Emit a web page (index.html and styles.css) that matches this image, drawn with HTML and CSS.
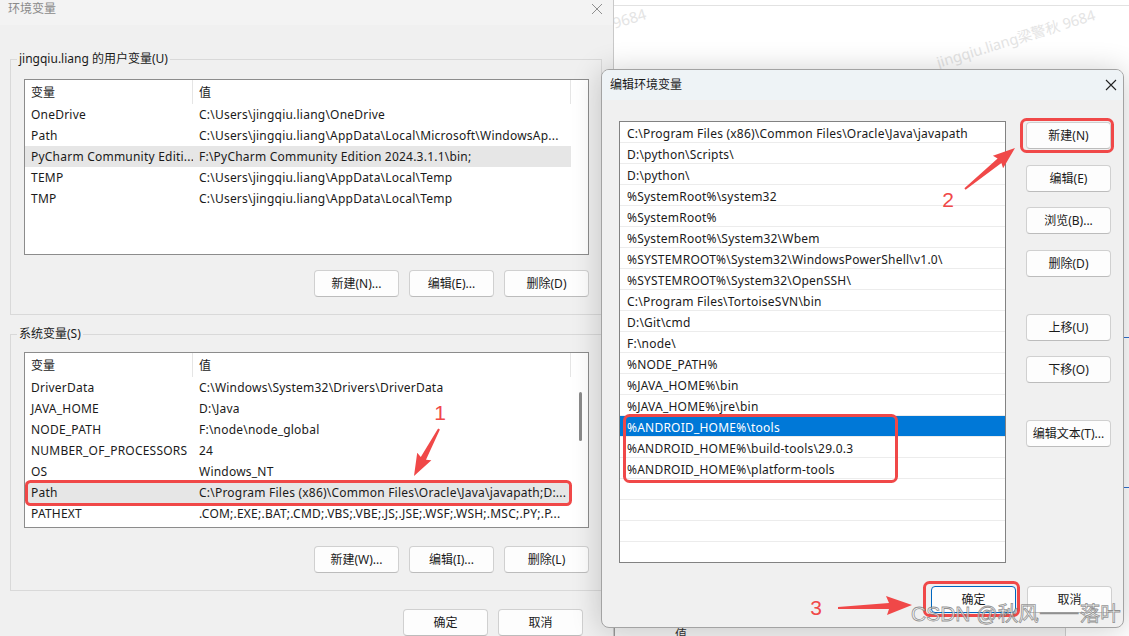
FILE: index.html
```html
<!DOCTYPE html>
<html lang="zh-CN">
<head>
<meta charset="utf-8">
<title>环境变量</title>
<link rel="stylesheet" href="styles.css">
</head>
<body>
<div class="desktop">

  <div class="bg-window">
    <div class="bg-topline"></div>
    <span class="wm wm-small">9684</span>
    <span class="wm wm-big">jingqiu.liang梁警秋 9684</span>
    <div class="edge-mark edge-a"></div>
    <div class="edge-mark edge-b"></div>
    <div class="bg-bottom"><span class="bg-bottom-text">值</span></div>
  </div>

  <section class="env">
    <header class="titlebar-env">
      <span class="title-env">环境变量</span>
      <svg class="close-env" viewBox="0 0 12 12"><path d="M1 1L11 11M11 1L1 11" stroke="#8f8f8f" stroke-width="1" fill="none"/></svg>
    </header>

    <div class="group g-user">
      <div class="group-label">jingqiu.liang 的用户变量(U)</div>
      <div class="listview">
        <div class="lv-head"><span class="c1">变量</span><span class="c2">值</span></div>
        <div class="lv-row"><span class="c1">OneDrive</span><span class="c2">C:\Users\jingqiu.liang\OneDrive</span></div>
        <div class="lv-row"><span class="c1">Path</span><span class="c2">C:\Users\jingqiu.liang\AppData\Local\Microsoft\WindowsAp...</span></div>
        <div class="lv-row sel"><span class="c1">PyCharm Community Editi...</span><span class="c2">F:\PyCharm Community Edition 2024.3.1.1\bin;</span></div>
        <div class="lv-row"><span class="c1">TEMP</span><span class="c2">C:\Users\jingqiu.liang\AppData\Local\Temp</span></div>
        <div class="lv-row"><span class="c1">TMP</span><span class="c2">C:\Users\jingqiu.liang\AppData\Local\Temp</span></div>
      </div>
      <div class="btn-row">
        <button class="btn">新建(N)...</button>
        <button class="btn">编辑(E)...</button>
        <button class="btn">删除(D)</button>
      </div>
    </div>

    <div class="group g-sys">
      <div class="group-label">系统变量(S)</div>
      <div class="listview">
        <div class="lv-head"><span class="c1">变量</span><span class="c2">值</span></div>
        <div class="lv-row"><span class="c1">DriverData</span><span class="c2">C:\Windows\System32\Drivers\DriverData</span></div>
        <div class="lv-row"><span class="c1">JAVA_HOME</span><span class="c2">D:\Java</span></div>
        <div class="lv-row"><span class="c1">NODE_PATH</span><span class="c2">F:\node\node_global</span></div>
        <div class="lv-row"><span class="c1">NUMBER_OF_PROCESSORS</span><span class="c2">24</span></div>
        <div class="lv-row"><span class="c1">OS</span><span class="c2">Windows_NT</span></div>
        <div class="lv-row sel"><span class="c1">Path</span><span class="c2">C:\Program Files (x86)\Common Files\Oracle\Java\javapath;D:...</span></div>
        <div class="lv-row"><span class="c1">PATHEXT</span><span class="c2">.COM;.EXE;.BAT;.CMD;.VBS;.VBE;.JS;.JSE;.WSF;.WSH;.MSC;.PY;.P...</span></div>
        <div class="thumb"></div>
      </div>
      <div class="btn-row">
        <button class="btn">新建(W)...</button>
        <button class="btn">编辑(I)...</button>
        <button class="btn">删除(L)</button>
      </div>
    </div>

    <div class="footer-env">
      <button class="btn">确定</button>
      <button class="btn">取消</button>
    </div>
  </section>

  <section class="edit">
    <header class="titlebar-edit">
      <span class="title-edit">编辑环境变量</span>
      <svg class="close-edit" viewBox="0 0 12 12"><path d="M1 1L11 11M11 1L1 11" stroke="#222" stroke-width="1.1" fill="none"/></svg>
    </header>
    <div class="edit-body">
      <div class="pathlist">
        <div class="pl-row">C:\Program Files (x86)\Common Files\Oracle\Java\javapath</div>
        <div class="pl-row">D:\python\Scripts\</div>
        <div class="pl-row">D:\python\</div>
        <div class="pl-row">%SystemRoot%\system32</div>
        <div class="pl-row">%SystemRoot%</div>
        <div class="pl-row">%SystemRoot%\System32\Wbem</div>
        <div class="pl-row">%SYSTEMROOT%\System32\WindowsPowerShell\v1.0\</div>
        <div class="pl-row">%SYSTEMROOT%\System32\OpenSSH\</div>
        <div class="pl-row">C:\Program Files\TortoiseSVN\bin</div>
        <div class="pl-row">D:\Git\cmd</div>
        <div class="pl-row">F:\node\</div>
        <div class="pl-row">%NODE_PATH%</div>
        <div class="pl-row">%JAVA_HOME%\bin</div>
        <div class="pl-row">%JAVA_HOME%\jre\bin</div>
        <div class="pl-row sel">%ANDROID_HOME%\tools</div>
        <div class="pl-row">%ANDROID_HOME%\build-tools\29.0.3</div>
        <div class="pl-row">%ANDROID_HOME%\platform-tools</div>
        <div class="pl-row"></div>
        <div class="pl-row"></div>
        <div class="pl-row"></div>
        <div class="pl-row"></div>
      </div>
      <div class="side">
        <button class="btn s-first">新建(N)</button>
        <button class="btn s-16">编辑(E)</button>
        <button class="btn s-15">浏览(B)...</button>
        <button class="btn s-16">删除(D)</button>
        <button class="btn s-37">上移(U)</button>
        <button class="btn s-15">下移(O)</button>
        <button class="btn s-37">编辑文本(T)...</button>
      </div>
    </div>
    <div class="footer-edit">
      <button class="btn btn-default">确定</button>
      <button class="btn">取消</button>
    </div>
  </section>

  <svg class="annot" viewBox="0 0 1129 636" width="1129" height="636">
    <g fill="none" stroke="#f04848" stroke-width="3">
      <rect x="26.5" y="481.5" width="544" height="23" rx="4"/>
      <rect x="624.5" y="415.5" width="272" height="66" rx="5"/>
      <rect x="1021.5" y="119.5" width="91" height="32" rx="5"/>
      <rect x="924.5" y="582.5" width="94" height="33" rx="5"/>
    </g>
    <g fill="#f04848">
      <polygon points="439.9,429.5 426.0,459.7 431.4,460.3 414,476 417.2,452.7 420.8,456.9 438.1,428.5"/>
      <polygon points="965.6,189.8 1001.4,163.0 1003.1,168.2 1015,148 992.9,155.8 997.6,158.4 964.4,188.2"/>
      <polygon points="838,607 889,603 886,596 912,605 887,615 889,609 838,609"/>
    </g>
    <g class="num" fill="#f04848">
      <text x="440" y="420" text-anchor="middle">1</text>
      <text x="948" y="207" text-anchor="middle">2</text>
      <text x="816" y="615" text-anchor="middle">3</text>
    </g>
  </svg>

  <span class="csdn">CSDN @<span class="csdn-cjk">秋风——落叶</span></span>
</div>
</body>
</html>
```

FILE: styles.css
```css
* { box-sizing: border-box; }
html, body { margin: 0; padding: 0; }
body {
  width: 1129px;
  height: 636px;
  overflow: hidden;
  background: #fff;
  font-family: "Noto Sans", "Noto Sans CJK SC", sans-serif;
  font-size: 12px;
  color: #1a1a1a;
}
.desktop { position: relative; width: 1129px; height: 636px; overflow: hidden; }

/* background window (behind) */
.bg-window { position: absolute; left: 614px; top: 0; width: 515px; height: 636px; background: #fff; }
.bg-topline { height: 6px; border-bottom: 1px solid #e2e2e2; }
.wm { position: absolute; color: #e4e4e4; white-space: nowrap; font-size: 15px; }
.wm-small { left: -2px; top: 8px; transform: rotate(-17deg); }
.wm-big { left: 319px; top: 27px; transform: rotate(-17deg); transform-origin: center; font-size: 14.5px; }
.edge-mark { position: absolute; left: 508px; width: 7px; height: 1px; background: #2f6fd0; }
.edge-a { top: 337px; }
.edge-b { top: 487px; }
.bg-bottom { position: absolute; left: 0; top: 627px; width: 452px; height: 9px; background: #f4f4f4; border-left: 1px solid #9a9a9a; border-right: 1px solid #cfcfcf; }
.bg-bottom-text { position: absolute; left: 60px; top: 1px; line-height: 14px; color: #333; }

/* left dialog */
.env { position: absolute; left: 0; top: 0; width: 614px; height: 636px; background: #f0f0f0; border-right: 1px solid #c9c9c9; }
.titlebar-env { height: 25px; background: #f3f3f3; display: flex; justify-content: space-between; align-items: flex-start; padding: 0 10px 0 8px; }
.title-env { line-height: 18px; color: #8a8a8a; }
.close-env { width: 12px; height: 12px; margin-top: 3px; }

.group { margin-left: 10px; width: 592px; border: 1px solid #d9d9d9; padding: 0 12px 17px 13px; }
.g-user { margin-top: 34px; }
.g-sys { margin-top: 19px; }
.group-label { width: fit-content; margin: -9px 0 0 -7px; padding: 0 2px; background: #f0f0f0; line-height: 16px; }

.listview { position: relative; width: 565px; height: 176px; border: 1px solid #8c8c8c; background: #fff; overflow: hidden; }
.g-user .listview { margin-top: 12px; }
.g-sys .listview { margin-top: 10px; }
.lv-head, .lv-row { display: flex; width: 546px; }
.lv-head { height: 24px; line-height: 25px; }
.lv-row { height: 21px; line-height: 22px; }
.c1, .c2 { white-space: nowrap; overflow: hidden; padding-left: 6px; letter-spacing: 0.22px; }
.c1 { width: 168px; flex: none; }
.c2 { width: 378px; flex: none; }
.lv-head .c1, .lv-head .c2 { border-right: 1px solid #e5e5e5; letter-spacing: 0; }
.lv-row.sel { background: #e6e6e6; }
.thumb { position: absolute; left: 554px; top: 39px; width: 3px; height: 49px; background: #8a8a8a; border-radius: 2px; }

.btn-row { display: flex; justify-content: flex-end; gap: 10px; }
.g-user .btn-row { margin-top: 15px; }
.g-sys .btn-row { margin-top: 18px; }

.btn {
  width: 85px;
  height: 27px;
  padding: 0;
  border: 1px solid #d0d0d0;
  border-bottom-color: #bcbcbc;
  border-radius: 4px;
  background: #fdfdfd;
  font: inherit;
  color: #1a1a1a;
  line-height: 25px;
}

.footer-env { display: flex; justify-content: flex-end; gap: 10px; margin-top: 18px; padding-right: 30px; }

/* right dialog */
.edit {
  position: absolute;
  left: 601px;
  top: 69px;
  width: 523px;
  height: 559px;
  background: #f0f0f0;
  border: 1px solid #a3a3a3;
  border-radius: 8px;
  overflow: hidden;
  box-shadow: 0 2px 30px rgba(0, 0, 0, 0.2);
}
.titlebar-edit { height: 30px; background: #eef3f6; display: flex; justify-content: space-between; align-items: center; padding: 0 6px 0 8px; }
.title-edit { line-height: 26px; }
.close-edit { width: 12px; height: 12px; }

.edit-body { display: flex; padding: 21px 0 0 17px; }
.pathlist { width: 387px; height: 442px; border: 1px solid #828282; background: #fff; overflow: hidden; flex: none; }
.pl-row { height: 21px; line-height: 24px; border-bottom: 1px solid #ececec; padding-left: 7px; white-space: nowrap; overflow: hidden; letter-spacing: 0.22px; }
.pl-row.sel { background: #0078d7; color: #fff; }

.side { display: flex; flex-direction: column; margin-left: 20px; }
.s-first { margin-top: 1px; }
.s-15 { margin-top: 15px; }
.s-16 { margin-top: 16px; }
.s-37 { margin-top: 37px; }

.footer-edit { display: flex; justify-content: flex-end; gap: 11px; margin-top: 23px; padding-right: 11px; }
.btn-default { border: 1px solid #0067c0; }

/* annotations */
.annot { position: absolute; left: 0; top: 0; pointer-events: none; }
.num text { font-family: "Liberation Sans", sans-serif; font-size: 21px; }

.csdn {
  position: absolute;
  left: 911px;
  top: 597px;
  font-size: 21px;
  line-height: 30px;
  white-space: nowrap;
  color: rgba(255, 255, 255, 0.65);
  -webkit-text-stroke: 0.8px rgba(110, 110, 110, 0.75);
  font-family: "Liberation Sans", "Noto Sans CJK SC", sans-serif;
  pointer-events: none;
}
.csdn-cjk { font-family: "Noto Sans CJK SC", sans-serif; font-size: 20.5px; }
```
